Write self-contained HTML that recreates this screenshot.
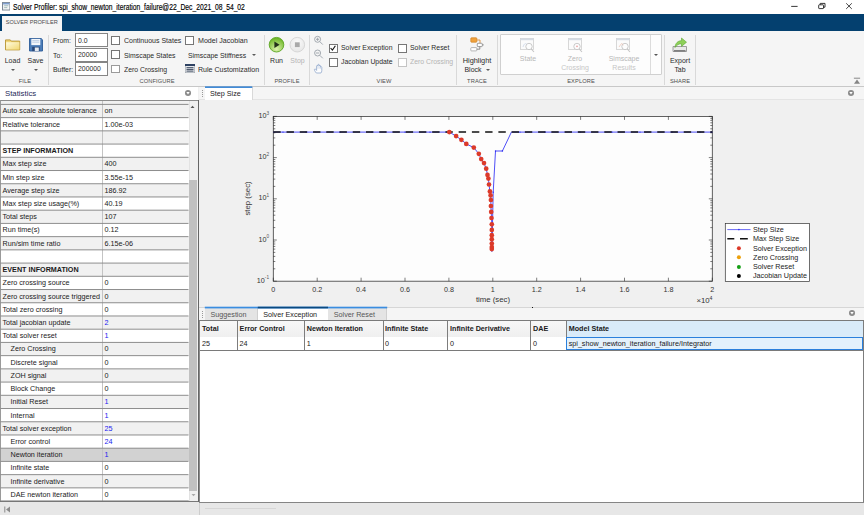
<!DOCTYPE html>
<html><head><meta charset="utf-8">
<style>
*{box-sizing:border-box;margin:0;padding:0}
html,body{width:864px;height:515px;overflow:hidden;background:#f0f0f0;font-family:"Liberation Sans",sans-serif;font-size:7px;color:#222}
.a{position:absolute;white-space:nowrap}
#title{left:0;top:0;width:864px;height:14px;background:#fff}
#band{left:0;top:14px;width:864px;height:17px;background:#04406f}
#rtab{left:2px;top:16px;width:60px;height:15px;background:#f5f5f5;font-size:6px;line-height:12.600px;text-align:center;color:#4a4a4a}#rtab span{display:inline-block;transform:scaleX(.935)}
#ribbon{left:0;top:31px;width:864px;height:56px;background:#f5f5f5;border-bottom:1px solid #c8c8c8}
.vsep{width:1px;background:#d9d9d9;top:35px;height:50px}
.sec{top:77px;font-size:5.8px;color:#555;text-align:center;line-height:8px}
.rl{font-size:7.2px;color:#333;line-height:9px}
.dis{color:#b0b0b0}
.cb{width:8.800px;height:8.600px;border:1px solid #767676;background:#fff}
.inp{width:32.500px;height:13.500px;border:1px solid #858585;background:#fff;font-size:7px;line-height:12px;padding-left:2px;color:#222}
.tri{width:0;height:0;border-left:2.500px solid transparent;border-right:2.500px solid transparent;border-top:2.500px solid #5a5a5a;margin:0.300px 0 0 0.500px}
</style></head><body>
<!-- TITLE BAR -->
<div id="title" class="a">
  <svg class="a" style="left:1.500px;top:2px" width="8.500" height="8.500" viewBox="0 0 8 9" preserveAspectRatio="none"><rect x="0.5" y="0.5" width="7" height="8" fill="#f6f6f6" stroke="#7d8896"/><rect x="1" y="1" width="6" height="1.600" fill="#7f9fcf"/><path d="M2 4h4M2 6h3" stroke="#8aa" stroke-width="0.8"/></svg>
  <div class="a" id="ttext" style="left:13.300px;top:2.600px;font-size:8.200px;line-height:10px;color:#000;-webkit-text-stroke:0.150px #000;transform:scaleX(.8226);transform-origin:0 50%">Solver Profiler: spi_show_newton_iteration_failure@22_Dec_2021_08_54_02</div>
  <svg class="a" style="left:780px;top:0" width="84" height="14" viewBox="0 0 84 14"><path d="M11.200 6.400h6.400" stroke="#222" stroke-width="0.900"/><rect x="38.700" y="4.800" width="4.800" height="3.800" rx="0.500" fill="#fff" stroke="#222" stroke-width="0.900"/><path d="M40.200 4.800v-1.400h4.800v3.800h-1.500" fill="none" stroke="#222" stroke-width="0.900"/><path d="M66.200 3.300l5.600 5.600M71.800 3.300l-5.600 5.600" stroke="#222" stroke-width="0.850"/></svg>
</div>
<div id="band" class="a"></div>
<div id="rtab" class="a"><span>SOLVER PROFILER</span></div>
<div id="ribbon" class="a"></div>
<!--RIBBON-START-->
<style>
.t{display:inline-block;transform:scaleX(.915);transform-origin:0 50%;font-size:7.5px;line-height:10px;color:#2b2b2b}
.tc{display:block;transform:scaleX(.93);transform-origin:50% 50%;font-size:7.5px;line-height:10px;color:#2b2b2b;text-align:center}
.sl{font-size:6px;color:#4d4d4d;line-height:8px;text-align:center;transform:scaleX(.95);letter-spacing:0.1px}
</style>
<!-- FILE -->
<svg class="a" style="left:5px;top:38.600px" width="16" height="12" viewBox="0 0 16 12"><defs><linearGradient id="fg" x1="0" y1="0" x2="1" y2="1"><stop offset="0" stop-color="#fffbe0"/><stop offset="1" stop-color="#f2d871"/></linearGradient></defs><path d="M0.500 0.900h4.800l1 1.200h8.400v8.800h-14.200z" fill="#f1d679" stroke="#b89433" stroke-width="0.900"/><path d="M1.100 3.300h13.300v7.300h-13.300z" fill="url(#fg)"/></svg>
<svg class="a" style="left:29px;top:38px" width="14" height="14" viewBox="0 0 14 14"><path d="M0.500 0.500h11.700l1.300 1.300v11.200h-13z" fill="#4c7db8" stroke="#2c5c98" stroke-width="0.900"/><rect x="2.300" y="0.900" width="9" height="6.200" fill="#f2f6fb"/><path d="M3.300 2.600h7M3.300 4.200h7" stroke="#9bb4d4" stroke-width="0.600"/><rect x="3.200" y="8.800" width="7.400" height="4.300" fill="#26487a"/><rect x="5.800" y="9.500" width="4" height="3.600" fill="#e4e9f0"/></svg>
<div class="a tc" style="left:0;top:55.500px;width:25px">Load</div>
<div class="a tc" style="left:23px;top:55.500px;width:25px">Save</div>
<div class="a tri" style="left:10px;top:68.500px"></div>
<div class="a tri" style="left:33px;top:68.500px"></div>
<div class="a sl" style="left:4.600px;top:76.800px;width:40px">FILE</div>
<div class="a vsep" style="left:48px"></div>
<!-- CONFIGURE -->
<div class="a t" style="left:52.500px;top:36px">From:</div>
<div class="a t" style="left:52.500px;top:50.500px">To:</div>
<div class="a t" style="left:52.500px;top:64.500px">Buffer:</div>
<div class="a inp" style="left:75.300px;top:33.300px"><span class="t" style="position:relative;top:0.500px">0.0</span></div>
<div class="a inp" style="left:75.300px;top:48.100px"><span class="t" style="position:relative;top:0.300px">20000</span></div>
<div class="a inp" style="left:75.300px;top:62.200px"><span class="t" style="position:relative;top:0px">200000</span></div>
<div class="a cb" style="left:111.200px;top:36.200px"></div>
<div class="a cb" style="left:111.200px;top:50.300px"></div>
<div class="a cb" style="left:111.200px;top:64.600px;border-color:#9a9a9a"></div>
<div class="a t" style="left:124px;top:36px;transform:scaleX(.935)">Continuous States</div>
<div class="a t" style="left:124px;top:50.500px">Simscape States</div>
<div class="a t" style="left:124px;top:64.500px">Zero Crossing</div>
<div class="a cb" style="left:185px;top:36.200px"></div>
<div class="a t" style="left:198px;top:36px;transform:scaleX(.945)">Model Jacobian</div>
<div class="a t" style="left:187.500px;top:50.500px">Simscape Stiffness</div>
<div class="a tri" style="left:251px;top:54px"></div>
<svg class="a" style="left:185px;top:64px" width="10" height="9" viewBox="0 0 10 9"><rect x="0.300" y="0.300" width="9.400" height="8.400" fill="#e9ebee" stroke="#9aa0a8" stroke-width="0.600"/><rect x="0" y="0" width="10" height="2" fill="#2f4263"/><path d="M1.500 3.700h7M1.500 5.400h7M1.500 7.100h7" stroke="#27344d" stroke-width="0.900"/></svg>
<div class="a t" style="left:198px;top:64.500px;transform:scaleX(.94)">Rule Customization</div>
<div class="a sl" style="left:127px;top:76.800px;width:60px">CONFIGURE</div>
<div class="a vsep" style="left:264px"></div>
<!-- PROFILE -->
<svg class="a" style="left:268px;top:36px" width="38" height="18" viewBox="0 0 38 18"><defs><radialGradient id="g1" cx="50%" cy="80%" r="75%"><stop offset="0" stop-color="#dcf3ad"/><stop offset="1" stop-color="#6db526"/></radialGradient><radialGradient id="g2" cx="50%" cy="35%" r="65%"><stop offset="0" stop-color="#fbfbfb"/><stop offset="1" stop-color="#e6e6e6"/></radialGradient></defs><circle cx="8.500" cy="8.700" r="7.300" fill="url(#g1)" stroke="#5aa520" stroke-width="0.900"/><path d="M6.400 5.400v6.600l5.200-3.300z" fill="#22301a"/><circle cx="29.300" cy="8.700" r="7.300" fill="url(#g2)" stroke="#cfcfcf" stroke-width="0.800"/><rect x="26.900" y="6.300" width="4.800" height="4.800" fill="#a9a9a9"/></svg>
<div class="a tc" style="left:264px;top:55.500px;width:25px">Run</div>
<div class="a tc dis" style="left:284.500px;top:55.500px;width:25px;color:#b4b4b4">Stop</div>
<div class="a sl" style="left:267px;top:76.800px;width:40px">PROFILE</div>
<div class="a vsep" style="left:308.700px"></div>
<!-- VIEW -->
<svg class="a" style="left:313px;top:35px" width="12" height="40" viewBox="0 0 12 40"><g fill="none" stroke="#9aa0a8" stroke-width="0.900"><circle cx="4.600" cy="4.300" r="3"/><path d="M6.800 6.600l3 3M3 4.300h3.200M4.600 2.700v3.200"/><circle cx="4.600" cy="18" r="3"/><path d="M6.800 20.300l3 3M3 18h3.200"/></g><path d="M3.300 38c-1.300-1.600-2.400-3.400-1.700-3.900.7-.5 1.500.5 2 1.300v-4.300c0-.9 1.300-.9 1.300 0v-1.100c0-.9 1.300-.9 1.300 0v1c0-.9 1.300-.9 1.300 0v1.200c0-.8 1.300-.8 1.300.1v3.200c0 1.200-.4 1.800-.9 2.500z" fill="#fdfdfd" stroke="#8fa7cc" stroke-width="0.800"/><path d="M4.900 31.200v2.600M6.200 31v2.800M7.500 31.400v2.400" stroke="#b5c5de" stroke-width="0.500"/></svg>
<div class="a cb" style="left:329px;top:44px"></div>
<svg class="a" style="left:329px;top:44px" width="8" height="8" viewBox="0 0 8 8"><path d="M1.600 4l1.800 2 3-4.300" fill="none" stroke="#111" stroke-width="1.100"/></svg>
<div class="a cb" style="left:329px;top:58px"></div>
<div class="a cb" style="left:398px;top:44px"></div>
<div class="a cb" style="left:398px;top:58px;border-color:#c4c4c4"></div>
<div class="a t" style="left:340.800px;top:43.200px">Solver Exception</div>
<div class="a t" style="left:340.800px;top:57.300px">Jacobian Update</div>
<div class="a t" style="left:410px;top:43.200px">Solver Reset</div>
<div class="a t" style="left:410px;top:57.300px;color:#b4b4b4">Zero Crossing</div>
<div class="a sl" style="left:363.500px;top:76.800px;width:40px">VIEW</div>
<div class="a vsep" style="left:456px"></div>
<!-- TRACE -->
<svg class="a" style="left:469px;top:36.500px" width="16" height="15" viewBox="0 0 16 15"><rect x="1.800" y="0.800" width="6" height="4.400" rx="0.700" fill="#f0a23c" stroke="#d18324" stroke-width="0.700"/><path d="M7.800 3h3.200v3" fill="none" stroke="#d8852a" stroke-width="0.800"/><rect x="8.300" y="6.300" width="5" height="3.300" rx="0.700" fill="#fff" stroke="#777" stroke-width="0.700"/><path d="M13.300 7.900h1.600" stroke="#777" stroke-width="0.700"/><rect x="1.800" y="10.600" width="6" height="3.300" rx="0.700" fill="#fff" stroke="#999" stroke-width="0.700"/><path d="M10.800 9.600v2.600h-3" fill="none" stroke="#666" stroke-width="0.700"/></svg>
<div class="a tc" style="left:457px;top:55.700px;width:40px;transform:scaleX(.98)">Highlight</div>
<div class="a tc" style="left:453px;top:65.100px;width:40px">Block</div>
<div class="a tri" style="left:485px;top:68.500px"></div>
<div class="a sl" style="left:457px;top:76.800px;width:40px">TRACE</div>
<div class="a vsep" style="left:497px"></div>
<!-- EXPLORE -->
<div class="a" style="left:500px;top:34px;width:162px;height:41px;border:1px solid #d0d0d0;background:#fdfdfd;border-radius:1px"></div>
<div class="a" style="left:650px;top:35px;width:1px;height:39px;background:#dcdcdc"></div>
<div class="a tri" style="left:653.500px;top:53.500px;border-top-color:#555"></div>
<svg class="a" style="left:520px;top:37.500px" width="15" height="15" viewBox="0 0 15 15"><rect x="0.400" y="0.400" width="13.200" height="11" fill="#fbfbfb" stroke="#cfcfcf" stroke-width="0.800"/><rect x="0.400" y="0.400" width="13.200" height="1.800" fill="#d5dbe3"/><circle cx="9" cy="8.500" r="3.200" fill="#fdfdfd" stroke="#c4c4c4" stroke-width="0.900"/><path d="M11.300 11l2.700 3" stroke="#c4c4c4" stroke-width="1.100"/><path d="M3 9c1-3 2-4 3.500-3" fill="none" stroke="#c5d3e6" stroke-width="0.700"/></svg>
<svg class="a" style="left:568px;top:37.500px" width="15" height="15" viewBox="0 0 15 15"><rect x="0.400" y="0.400" width="13.200" height="11" fill="#fbfbfb" stroke="#cfcfcf" stroke-width="0.800"/><rect x="0.400" y="0.400" width="13.200" height="1.800" fill="#d5dbe3"/><circle cx="9" cy="8.500" r="3.200" fill="#fdfdfd" stroke="#c4c4c4" stroke-width="0.900"/><path d="M11.300 11l2.700 3" stroke="#c4c4c4" stroke-width="1.100"/><circle cx="9" cy="8.300" r="0.900" fill="#e9a3a3"/></svg>
<svg class="a" style="left:616px;top:37.500px" width="15" height="15" viewBox="0 0 15 15"><rect x="0.400" y="0.400" width="13.200" height="11" fill="#fbfbfb" stroke="#cfcfcf" stroke-width="0.800"/><rect x="0.400" y="0.400" width="13.200" height="1.800" fill="#d5dbe3"/><circle cx="9" cy="8.500" r="3.200" fill="#fdfdfd" stroke="#c4c4c4" stroke-width="0.900"/><path d="M11.300 11l2.700 3" stroke="#c4c4c4" stroke-width="1.100"/><path d="M3 9l2.500-3.500 2 1.500" fill="none" stroke="#ecc0b0" stroke-width="0.700"/></svg>
<div class="a tc" style="left:507.500px;top:53.500px;width:40px;color:#b8b8b8">State</div>
<div class="a tc" style="left:555px;top:53.500px;width:40px;color:#b8b8b8">Zero</div>
<div class="a tc" style="left:555px;top:62.500px;width:40px;color:#c6c6c6">Crossing</div>
<div class="a tc" style="left:603.500px;top:53.500px;width:40px;color:#b8b8b8">Simscape</div>
<div class="a tc" style="left:603.500px;top:62.500px;width:40px;color:#c6c6c6">Results</div>
<div class="a sl" style="left:561px;top:76.800px;width:40px">EXPLORE</div>
<div class="a vsep" style="left:663.600px"></div>
<!-- SHARE -->
<svg class="a" style="left:672px;top:37px" width="16" height="16" viewBox="0 0 16 16"><path d="M1 9.500h13.500v5h-13.500z" fill="#e9e9e9" stroke="#8a8a8a" stroke-width="0.800"/><path d="M2 13.800h11.500" stroke="#555" stroke-width="1"/><path d="M3 10.500c.3-4.500 3-6.800 6.500-6.800v-2.700l5 4.200-5 4.200v-2.600c-2.500 0-4.600 1-6.500 3.700z" fill="#8ed058" stroke="#5aa630" stroke-width="0.600"/></svg>
<div class="a tc" style="left:659.500px;top:55.800px;width:40px">Export</div>
<div class="a tc" style="left:659.500px;top:65px;width:40px">Tab</div>
<div class="a sl" style="left:659.500px;top:76.800px;width:40px">SHARE</div>
<div class="a vsep" style="left:694.600px"></div>
<svg class="a" style="left:853px;top:76px" width="8" height="9" viewBox="0 0 8 9"><path d="M0.900 2.200h6.200" stroke="#7a7a7a" stroke-width="0.900"/><path d="M1 7.800l3-4.400 3 4.400z" fill="#858585"/></svg>
<!--RIBBON-END-->
<!--LEFT-START-->
<style>.lr{left:1px;width:187.500px;height:13.700px;font-size:7.200px;line-height:12.400px;color:#1a1a1a}.lr i{position:absolute;left:100.500px;top:0;width:1px;height:13.200px;background:#c4c4c4}.lr b{font-weight:700}.lr span{position:absolute;top:1px}.lr .v{left:103.500px}.bl{color:#1a1af0}</style>
<div class="a" style="left:0;top:87px;width:197.500px;height:13.500px;background:#fff"></div>
<div class="a" style="left:5px;top:88.500px;font-size:7.800px;line-height:10px;color:#1f2a5a">Statistics</div>
<svg class="a" style="left:183.800px;top:88.800px" width="8" height="8" viewBox="0 0 8 8"><circle cx="4" cy="4" r="3.050" fill="#8a8a8a"/><path d="M2.300 2.900h3.400l-1.700 2.700z" fill="#fff"/></svg>
<div class="a" style="left:0;top:100px;width:197.500px;height:402px;background:#fff;border-top:1px solid #8c8c8c;border-left:1px solid #9a9a9a"></div>
<div class="a" style="left:1px;top:101px;width:187.500px;height:3.900px;background:#f1f1f1"><i style="position:absolute;left:100.500px;top:0;width:1px;height:3px;background:#c4c4c4"></i></div>
<div class="a lr" style="top:104.4px;background:#f1f1f1"><span style="left:1.5px">Auto scale absolute tolerance</span><i></i><span class="v">on</span></div>
<div class="a lr" style="top:117.6px;background:#fff"><span style="left:1.5px">Relative tolerance</span><i></i><span class="v">1.00e-03</span></div>
<div class="a lr" style="top:130.8px;background:#f1f1f1"><span style="left:1.5px"></span><i></i><span class="v"></span></div>
<div class="a lr" style="top:144.1px;background:#fff"><span style="left:1.5px"><b>STEP INFORMATION</b></span><i></i><span class="v"></span></div>
<div class="a lr" style="top:157.3px;background:#f1f1f1"><span style="left:1.5px">Max step size</span><i></i><span class="v">400</span></div>
<div class="a lr" style="top:170.5px;background:#fff"><span style="left:1.5px">Min step size</span><i></i><span class="v">3.55e-15</span></div>
<div class="a lr" style="top:183.7px;background:#f1f1f1"><span style="left:1.5px">Average step size</span><i></i><span class="v">186.92</span></div>
<div class="a lr" style="top:197.0px;background:#fff"><span style="left:1.5px">Max step size usage(%)</span><i></i><span class="v">40.19</span></div>
<div class="a lr" style="top:210.2px;background:#f1f1f1"><span style="left:1.5px">Total steps</span><i></i><span class="v">107</span></div>
<div class="a lr" style="top:223.4px;background:#fff"><span style="left:1.5px">Run time(s)</span><i></i><span class="v">0.12</span></div>
<div class="a lr" style="top:236.6px;background:#f1f1f1"><span style="left:1.5px">Run/sim time ratio</span><i></i><span class="v">6.15e-06</span></div>
<div class="a lr" style="top:249.9px;background:#fff"><span style="left:1.5px"></span><i></i><span class="v"></span></div>
<div class="a lr" style="top:263.1px;background:#f1f1f1"><span style="left:1.5px"><b>EVENT INFORMATION</b></span><i></i><span class="v"></span></div>
<div class="a lr" style="top:276.3px;background:#fff"><span style="left:1.5px">Zero crossing source</span><i></i><span class="v">0</span></div>
<div class="a lr" style="top:289.5px;background:#f1f1f1"><span style="left:1.5px">Zero crossing source triggered</span><i></i><span class="v">0</span></div>
<div class="a lr" style="top:302.7px;background:#fff"><span style="left:1.5px">Total zero crossing</span><i></i><span class="v">0</span></div>
<div class="a lr" style="top:316.0px;background:#f1f1f1"><span style="left:1.5px">Total jacobian update</span><i></i><span class="v bl">2</span></div>
<div class="a lr" style="top:329.2px;background:#fff"><span style="left:1.5px">Total solver reset</span><i></i><span class="v bl">1</span></div>
<div class="a lr" style="top:342.4px;background:#f1f1f1"><span style="left:9.5px">Zero Crossing</span><i></i><span class="v">0</span></div>
<div class="a lr" style="top:355.6px;background:#fff"><span style="left:9.5px">Discrete signal</span><i></i><span class="v">0</span></div>
<div class="a lr" style="top:368.9px;background:#f1f1f1"><span style="left:9.5px">ZOH signal</span><i></i><span class="v">0</span></div>
<div class="a lr" style="top:382.1px;background:#fff"><span style="left:9.5px">Block Change</span><i></i><span class="v">0</span></div>
<div class="a lr" style="top:395.3px;background:#f1f1f1"><span style="left:9.5px">Initial Reset</span><i></i><span class="v bl">1</span></div>
<div class="a lr" style="top:408.5px;background:#fff"><span style="left:9.5px">Internal</span><i></i><span class="v bl">1</span></div>
<div class="a lr" style="top:421.8px;background:#f1f1f1"><span style="left:1.5px">Total solver exception</span><i></i><span class="v bl">25</span></div>
<div class="a lr" style="top:435.0px;background:#fff"><span style="left:9.5px">Error control</span><i></i><span class="v bl">24</span></div>
<div class="a lr" style="top:448.2px;background:#d2d2d2"><span style="left:9.5px">Newton iteration</span><i></i><span class="v bl">1</span></div>
<div class="a lr" style="top:461.4px;background:#fff"><span style="left:9.5px">Infinite state</span><i></i><span class="v">0</span></div>
<div class="a lr" style="top:474.6px;background:#f1f1f1"><span style="left:9.5px">Infinite derivative</span><i></i><span class="v">0</span></div>
<div class="a lr" style="top:487.9px;background:#fff"><span style="left:9.5px">DAE newton iteration</span><i></i><span class="v">0</span></div>
<svg class="a" style="left:0;top:0" width="198" height="515" viewBox="0 0 198 515"><path d="M0.5 104.40H188.5M0.5 117.62H188.5M0.5 130.85H188.5M0.5 144.07H188.5M0.5 157.29H188.5M0.5 170.52H188.5M0.5 183.74H188.5M0.5 196.96H188.5M0.5 210.18H188.5M0.5 223.41H188.5M0.5 236.63H188.5M0.5 249.85H188.5M0.5 263.08H188.5M0.5 276.30H188.5M0.5 289.52H188.5M0.5 302.75H188.5M0.5 315.97H188.5M0.5 329.19H188.5M0.5 342.41H188.5M0.5 355.64H188.5M0.5 368.86H188.5M0.5 382.08H188.5M0.5 395.31H188.5M0.5 408.53H188.5M0.5 421.75H188.5M0.5 434.98H188.5M0.5 448.20H188.5M0.5 461.42H188.5M0.5 474.64H188.5M0.5 487.87H188.5M0.5 501.09H188.5" stroke="#888" stroke-width="0.950" fill="none"/><path d="M0 501.400H198.500" stroke="#777" stroke-width="1.200"/></svg>
<div class="a" style="left:188.500px;top:101px;width:9px;height:400px;background:#f0f0f0;border-left:1px solid #e2e2e2"></div>
<div class="a" style="left:189.200px;top:179.700px;width:7.800px;height:311px;background:#c1c1c1"></div>
<svg class="a" style="left:188.300px;top:102.900px" width="9" height="8" viewBox="0 0 9 8"><path d="M2.500 5l2-2.200 2 2.200z" fill="#555"/></svg>
<svg class="a" style="left:189px;top:491px" width="9" height="8" viewBox="0 0 9 8"><path d="M2.500 3l2 2.200 2-2.200z" fill="#aaa"/></svg>
<div class="a" style="left:197.500px;top:87px;width:3.500px;height:416px;background:#f0f0f0"></div>
<!--LEFT-END-->
<!--RTOP-START-->
<div class="a" style="left:198px;top:100px;width:1.400px;height:402.700px;background:#666"></div>
<div class="a" style="left:199px;top:87px;width:665px;height:13px;background:#f5f5f5;border-bottom:1px solid #e4e4e4"></div>
<div class="a" style="left:201.500px;top:90px;width:1px;height:7px;border-left:1px dotted #999"></div>
<div class="a" style="left:205px;top:87px;width:47.500px;height:13px;background:#fff;border-right:1px solid #d9d9d9"></div>
<svg class="a" style="left:205px;top:85px" width="48" height="4" viewBox="0 0 48 4"><rect x="0" y="1.400" width="47.300" height="1.500" fill="#2d7fd3"/></svg>
<div class="a" style="left:210px;top:89px;font-size:7.200px;line-height:10px;color:#222">Step Size</div>
<svg class="a" style="left:846.700px;top:88.600px" width="8" height="8" viewBox="0 0 8 8"><circle cx="4" cy="4" r="3.050" fill="#8a8a8a"/><path d="M2.300 2.900h3.400l-1.700 2.700z" fill="#fff"/></svg>
<svg class="a" style="left:199px;top:100px" width="665" height="207" viewBox="199 100 665 207" font-family="Liberation Sans, sans-serif"><rect x="199" y="100" width="665" height="207" fill="#f0f0f0"/><rect x="273.3" y="116.4" width="439.0" height="164.8" fill="#fdfdfd" stroke="#3a3a3a" stroke-width="0.800"/><path d="M273.3 281.2v-3.500M273.3 116.4v3.500M317.2 281.2v-3.500M317.2 116.4v3.500M361.1 281.2v-3.500M361.1 116.4v3.500M405.0 281.2v-3.500M405.0 116.4v3.500M448.9 281.2v-3.500M448.9 116.4v3.500M492.8 281.2v-3.500M492.8 116.4v3.500M536.7 281.2v-3.500M536.7 116.4v3.500M580.6 281.2v-3.500M580.6 116.4v3.500M624.5 281.2v-3.500M624.5 116.4v3.500M668.4 281.2v-3.500M668.4 116.4v3.500M712.3 281.2v-3.500M712.3 116.4v3.500M273.3 116.4h3.500M712.3 116.4h-3.500M273.3 145.2h2M712.3 145.2h-2M273.3 137.9h2M712.3 137.9h-2M273.3 132.8h2M712.3 132.8h-2M273.3 128.8h2M712.3 128.8h-2M273.3 125.5h2M712.3 125.5h-2M273.3 122.8h2M712.3 122.8h-2M273.3 120.4h2M712.3 120.4h-2M273.3 118.3h2M712.3 118.3h-2M273.3 157.6h3.500M712.3 157.6h-3.500M273.3 186.4h2M712.3 186.4h-2M273.3 179.1h2M712.3 179.1h-2M273.3 174.0h2M712.3 174.0h-2M273.3 170.0h2M712.3 170.0h-2M273.3 166.7h2M712.3 166.7h-2M273.3 164.0h2M712.3 164.0h-2M273.3 161.6h2M712.3 161.6h-2M273.3 159.5h2M712.3 159.5h-2M273.3 198.8h3.500M712.3 198.8h-3.500M273.3 227.6h2M712.3 227.6h-2M273.3 220.3h2M712.3 220.3h-2M273.3 215.2h2M712.3 215.2h-2M273.3 211.2h2M712.3 211.2h-2M273.3 207.9h2M712.3 207.9h-2M273.3 205.2h2M712.3 205.2h-2M273.3 202.8h2M712.3 202.8h-2M273.3 200.7h2M712.3 200.7h-2M273.3 240.0h3.500M712.3 240.0h-3.500M273.3 268.8h2M712.3 268.8h-2M273.3 261.5h2M712.3 261.5h-2M273.3 256.4h2M712.3 256.4h-2M273.3 252.4h2M712.3 252.4h-2M273.3 249.1h2M712.3 249.1h-2M273.3 246.4h2M712.3 246.4h-2M273.3 244.0h2M712.3 244.0h-2M273.3 241.9h2M712.3 241.9h-2M273.3 281.2h3.500M712.3 281.2h-3.500" stroke="#262626" stroke-width="0.600" fill="none"/><text x="273.3" y="291.800" font-size="7.200" fill="#333" text-anchor="middle">0</text><text x="317.2" y="291.800" font-size="7.200" fill="#333" text-anchor="middle">0.2</text><text x="361.1" y="291.800" font-size="7.200" fill="#333" text-anchor="middle">0.4</text><text x="405.0" y="291.800" font-size="7.200" fill="#333" text-anchor="middle">0.6</text><text x="448.9" y="291.800" font-size="7.200" fill="#333" text-anchor="middle">0.8</text><text x="492.8" y="291.800" font-size="7.200" fill="#333" text-anchor="middle">1</text><text x="536.7" y="291.800" font-size="7.200" fill="#333" text-anchor="middle">1.2</text><text x="580.6" y="291.800" font-size="7.200" fill="#333" text-anchor="middle">1.4</text><text x="624.5" y="291.800" font-size="7.200" fill="#333" text-anchor="middle">1.6</text><text x="668.4" y="291.800" font-size="7.200" fill="#333" text-anchor="middle">1.8</text><text x="712.3" y="291.800" font-size="7.200" fill="#333" text-anchor="middle">2</text><text x="269" y="117.9" font-size="7.200" fill="#333" text-anchor="end">10<tspan font-size="4.700" dy="-3.300" fill="#555">3</tspan></text><text x="269" y="159.1" font-size="7.200" fill="#333" text-anchor="end">10<tspan font-size="4.700" dy="-3.300" fill="#555">2</tspan></text><text x="269" y="200.3" font-size="7.200" fill="#333" text-anchor="end">10<tspan font-size="4.700" dy="-3.300" fill="#555">1</tspan></text><text x="269" y="241.5" font-size="7.200" fill="#333" text-anchor="end">10<tspan font-size="4.700" dy="-3.300" fill="#555">0</tspan></text><text x="269" y="282.7" font-size="7.200" fill="#333" text-anchor="end">10<tspan font-size="4.700" dy="-3.300" fill="#555">-1</tspan></text><text x="493" y="301.800" font-size="7.800" fill="#333" text-anchor="middle">time (sec)</text><text x="0" y="0" font-size="7.800" fill="#333" text-anchor="middle" transform="translate(249.500 198.500) rotate(-90)">step (sec)</text><text x="712.500" y="303.200" font-size="7.800" fill="#333" text-anchor="end">×10<tspan font-size="5.200" dy="-3.400">4</tspan></text><path d="M273.3 132.1 L449.3 132.1 L456.1 136.1 L461.4 139.8 L466.3 143.9 L473.8 147.6 L478.8 153.8 L481.2 159.1 L484.0 163.1 L486.2 168.7 L487.5 174.9 L488.4 178.6 L489.0 184.5 L489.9 191.4 L490.6 195.4 L490.9 200.0 L490.9 206.0 L491.2 211.9 L491.5 218.0 L491.8 224.3 L491.8 229.9 L491.8 235.2 L491.8 239.2 L491.8 243.5 L491.8 247.0 L491.8 249.1 L491.9 251.5 L493.2 192.3 L495.5 151.0 L502.4 151.0 L511.4 132.1 L712.3 132.1" fill="none" stroke="#2222f5" stroke-width="0.800"/><g fill="#2a2af0"><circle cx="283.0" cy="132.1" r="0.700"/><circle cx="306.0" cy="132.1" r="0.700"/><circle cx="340.0" cy="132.1" r="0.700"/><circle cx="372.0" cy="132.1" r="0.700"/><circle cx="405.0" cy="132.1" r="0.700"/><circle cx="430.0" cy="132.1" r="0.700"/><circle cx="520.0" cy="132.1" r="0.700"/><circle cx="545.0" cy="132.1" r="0.700"/><circle cx="580.0" cy="132.1" r="0.700"/><circle cx="612.0" cy="132.1" r="0.700"/><circle cx="640.0" cy="132.1" r="0.700"/><circle cx="672.0" cy="132.1" r="0.700"/><circle cx="700.0" cy="132.1" r="0.700"/><circle cx="711.5" cy="132.1" r="0.700"/><circle cx="493.2" cy="192.3" r="0.700"/><circle cx="495.5" cy="151.0" r="0.700"/><circle cx="502.4" cy="151.0" r="0.700"/></g><path d="M273.3 132.1H712.3" stroke="#111" stroke-width="1.500" stroke-dasharray="7.400 5.840" fill="none"/><g fill="#dc3a2a"><circle cx="449.3" cy="132.1" r="2.350"/><circle cx="456.1" cy="136.1" r="2.350"/><circle cx="461.4" cy="139.8" r="2.350"/><circle cx="466.3" cy="143.9" r="2.350"/><circle cx="473.8" cy="147.6" r="2.350"/><circle cx="478.8" cy="153.8" r="2.350"/><circle cx="481.2" cy="159.1" r="2.350"/><circle cx="484.0" cy="163.1" r="2.350"/><circle cx="486.2" cy="168.7" r="2.350"/><circle cx="487.5" cy="174.9" r="2.350"/><circle cx="488.4" cy="178.6" r="2.350"/><circle cx="489.0" cy="184.5" r="2.350"/><circle cx="489.9" cy="191.4" r="2.350"/><circle cx="490.6" cy="195.4" r="2.350"/><circle cx="490.9" cy="200.0" r="2.350"/><circle cx="490.9" cy="206.0" r="2.350"/><circle cx="491.2" cy="211.9" r="2.350"/><circle cx="491.5" cy="218.0" r="2.350"/><circle cx="491.8" cy="224.3" r="2.350"/><circle cx="491.8" cy="229.9" r="2.350"/><circle cx="491.8" cy="235.2" r="2.350"/><circle cx="491.8" cy="239.2" r="2.350"/><circle cx="491.8" cy="243.5" r="2.350"/><circle cx="491.8" cy="247.0" r="2.350"/><circle cx="491.8" cy="249.1" r="2.350"/></g><rect x="725.300" y="223.400" width="84.200" height="58" fill="#fff" stroke="#333" stroke-width="0.700"/><path d="M727.300 229.6H750.500" stroke="#2a2af0" stroke-width="0.700"/><circle cx="738.900" cy="229.6" r="0.800" fill="#2a2af0"/><path d="M727.300 238.7h7M740 238.7h7.800" stroke="#111" stroke-width="1.500"/><circle cx="738.900" cy="248.2" r="2" fill="#dc3a2a"/><circle cx="738.900" cy="257.3" r="2" fill="#eda10c"/><circle cx="738.900" cy="266.9" r="2" fill="#16a016"/><circle cx="738.900" cy="275.9" r="2" fill="#000"/><text x="753" y="232.1" font-size="7.200" fill="#222">Step Size</text><text x="753" y="241.2" font-size="7.200" fill="#222">Max Step Size</text><text x="753" y="250.7" font-size="7.200" fill="#222">Solver Exception</text><text x="753" y="259.8" font-size="7.200" fill="#222">Zero Crossing</text><text x="753" y="269.4" font-size="7.200" fill="#222">Solver Reset</text><text x="753" y="278.4" font-size="7.200" fill="#222">Jacobian Update</text></svg>
<!--RTOP-END-->
<!--RBOT-START-->
<div class="a" style="left:199px;top:307px;width:665px;height:14px;background:#f5f5f5;border-top:1px solid #d6d6d6"></div>
<div class="a" style="left:201.500px;top:310.500px;width:1px;height:7px;border-left:1px dotted #999"></div>
<div class="a" style="left:204.800px;top:308px;width:53px;height:12.500px;background:#e4e4e4;border-right:1px solid #cfcfcf"></div>
<div class="a" style="left:328px;top:308px;width:59.200px;height:12.500px;background:#e4e4e4;border-right:1px solid #cfcfcf"></div>
<div class="a" style="left:257.800px;top:308px;width:70.200px;height:13px;background:#fff"></div>
<svg class="a" style="left:204px;top:305px" width="185" height="5" viewBox="204 305 185 5"><rect x="204.800" y="306.700" width="182.400" height="1.700" fill="#3a8de0"/><rect x="257.800" y="306.700" width="70.200" height="1.700" fill="#0b4a80"/></svg>
<div class="a" style="left:210.500px;top:309.700px;font-size:7.200px;line-height:10px;color:#555">Suggestion</div>
<div class="a" style="left:263.200px;top:309.700px;font-size:7.200px;line-height:10px;color:#222">Solver Exception</div>
<div class="a" style="left:333.800px;top:309.700px;font-size:7.200px;line-height:10px;color:#555">Solver Reset</div>
<svg class="a" style="left:847.500px;top:309.300px" width="8" height="8" viewBox="0 0 8 8"><circle cx="4" cy="4" r="3.050" fill="#8a8a8a"/><path d="M2.300 2.900h3.400l-1.700 2.700z" fill="#fff"/></svg>
<div class="a" style="left:532px;top:307px;width:1px;height:1px;background:#111"></div>
<div class="a" style="left:199px;top:319.700px;width:665px;height:183px;background:#fff;border-top:1px solid #7a7a7a;border-left:1px solid #8a8a8a"></div>
<div class="a" style="left:200px;top:320.700px;width:663px;height:16px;background:linear-gradient(#f7f7f7,#efefef)"></div>
<div class="a" style="left:200px;top:349.500px;width:663px;height:1px;background:#7a7a7a"></div>
<div class="a" style="left:566.800px;top:320.700px;width:296.200px;height:16.300px;background:#d9ebf9"></div>
<div class="a" style="left:566.300px;top:337px;width:296.900px;height:13.200px;background:#e3f1fc;border:1.500px solid #2b80dc"></div>
<div class="a" style="left:236.7px;top:320.700px;width:1px;height:29.3px;background:#7d7d7d"></div>
<div class="a" style="left:202.0px;top:324px;font-size:7.200px;line-height:10px;font-weight:700;color:#1a1a1a">Total</div>
<div class="a" style="left:202.0px;top:338.500px;font-size:7.200px;line-height:10px;color:#1a1a1a">25</div>
<div class="a" style="left:303.8px;top:320.700px;width:1px;height:29.3px;background:#7d7d7d"></div>
<div class="a" style="left:239.6px;top:324px;font-size:7.200px;line-height:10px;font-weight:700;color:#1a1a1a">Error Control</div>
<div class="a" style="left:239.6px;top:338.500px;font-size:7.200px;line-height:10px;color:#1a1a1a">24</div>
<div class="a" style="left:382.5px;top:320.700px;width:1px;height:29.3px;background:#7d7d7d"></div>
<div class="a" style="left:306.7px;top:324px;font-size:7.200px;line-height:10px;font-weight:700;color:#1a1a1a">Newton Iteration</div>
<div class="a" style="left:306.7px;top:338.500px;font-size:7.200px;line-height:10px;color:#1a1a1a">1</div>
<div class="a" style="left:447.3px;top:320.700px;width:1px;height:29.3px;background:#7d7d7d"></div>
<div class="a" style="left:385.0px;top:324px;font-size:7.200px;line-height:10px;font-weight:700;color:#1a1a1a">Infinite State</div>
<div class="a" style="left:385.0px;top:338.500px;font-size:7.200px;line-height:10px;color:#1a1a1a">0</div>
<div class="a" style="left:530.1px;top:320.700px;width:1px;height:29.3px;background:#7d7d7d"></div>
<div class="a" style="left:450.1px;top:324px;font-size:7.200px;line-height:10px;font-weight:700;color:#1a1a1a">Infinite Derivative</div>
<div class="a" style="left:450.1px;top:338.500px;font-size:7.200px;line-height:10px;color:#1a1a1a">0</div>
<div class="a" style="left:565.8px;top:320.700px;width:1px;height:16.3px;background:#7d7d7d"></div>
<div class="a" style="left:533.1px;top:324px;font-size:7.200px;line-height:10px;font-weight:700;color:#1a1a1a">DAE</div>
<div class="a" style="left:533.1px;top:338.500px;font-size:7.200px;line-height:10px;color:#1a1a1a">0</div>
<div class="a" style="left:863.0px;top:320.700px;width:1px;height:182.0px;background:#7d7d7d"></div>
<div class="a" style="left:568.7px;top:324px;font-size:7.200px;line-height:10px;font-weight:700;color:#1a1a1a">Model State</div>
<div class="a" style="left:568.7px;top:338.500px;font-size:7.200px;line-height:10px;color:#1a1a1a">spi_show_newton_iteration_failure/Integrator</div>
<!--RBOT-END-->
<!--STATUS-START-->
<div class="a" style="left:0;top:502px;width:864px;height:13px;background:#e7e7e7"></div>
<svg class="a" style="left:199px;top:495px" width="665" height="10" viewBox="199 495 665 10"><path d="M199 502.500H864" stroke="#858585" stroke-width="1"/></svg>
<svg class="a" style="left:4px;top:505.500px" width="8" height="7" viewBox="0 0 8 7"><path d="M0.800 0.500v6" stroke="#8a8a8a" stroke-width="1"/><path d="M6 0.500v6l-4-3z" fill="#8a8a8a"/></svg>
<div class="a" style="left:198.500px;top:503px;width:1px;height:12px;background:#cdcdcd"></div>
<div class="a" style="left:205px;top:507.700px;width:71px;height:1px;background:#d6d6d6"></div>
<!--STATUS-END-->
</body></html>
